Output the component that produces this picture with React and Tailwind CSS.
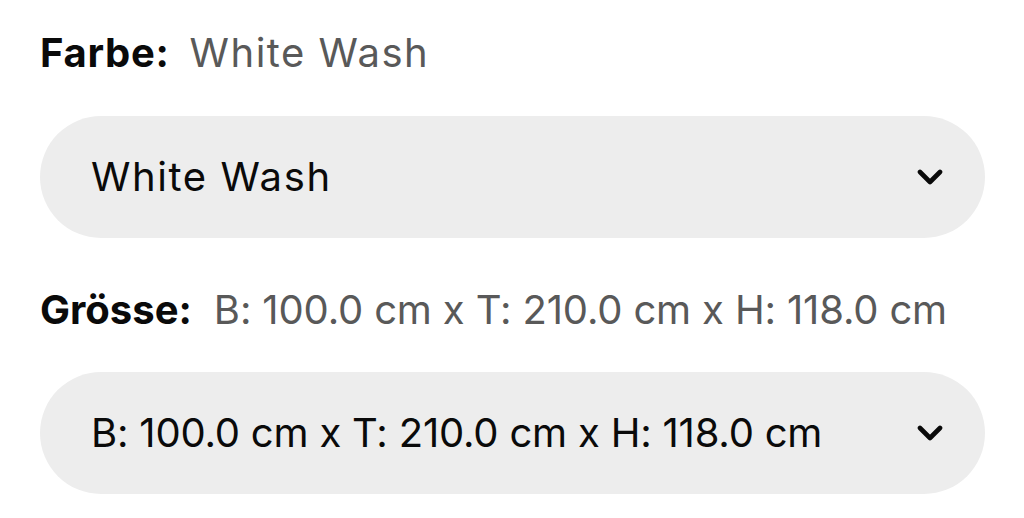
import React from "react";

function Chevron() {
  return (
    <svg width="26" height="17" viewBox="0 0 26 17" fill="none" className="shrink-0">
      <polyline points="3,3 13,13 23,3" stroke="#0a0a0a" strokeWidth="4.6" strokeLinecap="round" strokeLinejoin="round" />
    </svg>
  );
}

function Select({ children }) {
  return (
    <div className="w-[945px] h-[122px] rounded-full bg-[#ededed] flex items-center justify-between pl-[51px] pr-[42px]">
      {children}
      <Chevron />
    </div>
  );
}

export default function App() {
  const size = "B: 100.0 cm x T: 210.0 cm x H: 118.0 cm";
  return (
    <div className="w-[1024px] h-[518px] bg-white pl-[40px] pt-[33px] font-['Inter',sans-serif] overflow-hidden">
      <div className="flex items-baseline text-[40px] leading-[40px]">
        <span className="font-bold text-[#0a0a0a] tracking-[0.7px]">Farbe:</span>
        <span className="ml-[20px] text-[#595959] tracking-[1.5px]">White Wash</span>
      </div>
      <div className="mt-[43px]">
        <Select>
          <span className="text-[40px] leading-[40px] text-[#0a0a0a] tracking-[1.6px]">White Wash</span>
        </Select>
      </div>
      <div className="mt-[52px] flex items-baseline text-[40px] leading-[40px]">
        <span className="font-bold text-[#0a0a0a]">Grösse:</span>
        <span className="ml-[22px] text-[#595959] tracking-[-0.15px]">{size}</span>
      </div>
      <div className="mt-[42px]">
        <Select>
          <span className="text-[40px] leading-[40px] text-[#0a0a0a] tracking-[-0.2px]">{size}</span>
        </Select>
      </div>
    </div>
  );
}
